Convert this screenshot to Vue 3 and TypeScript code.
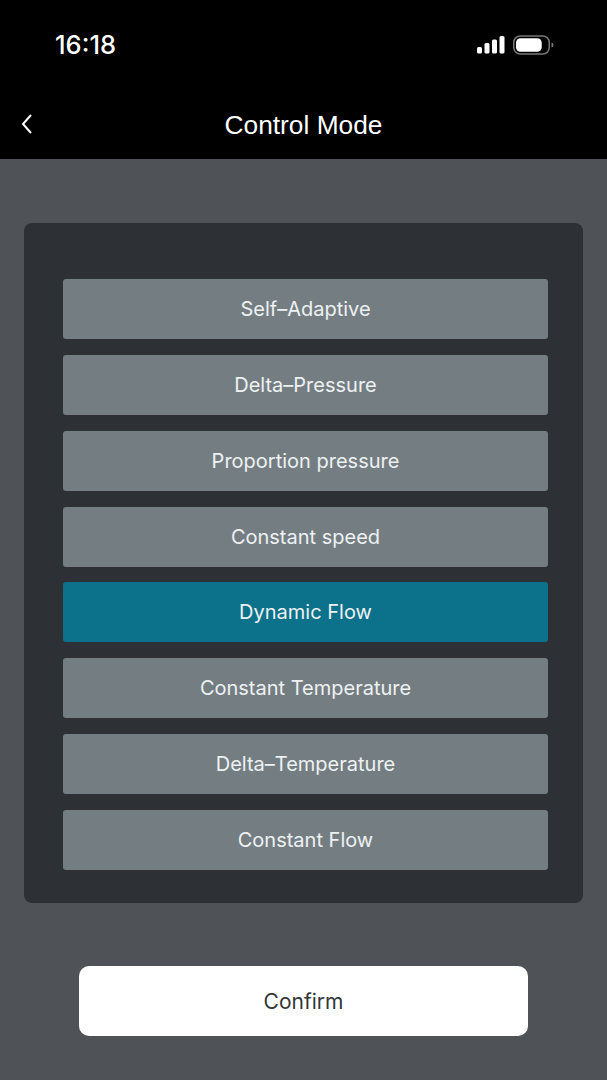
<script setup lang="ts">
const modes = [
  'Self–Adaptive',
  'Delta–Pressure',
  'Proportion pressure',
  'Constant speed',
  'Dynamic Flow',
  'Constant Temperature',
  'Delta–Temperature',
  'Constant Flow',
]
const activeMode = 'Dynamic Flow'
</script>

<template>
  <div class="screen">
    <header class="header">
      <div class="status-bar">
        <span class="time">16:18</span>
        <div class="status-icons">
          <svg width="28" height="18" viewBox="0 0 28 18" fill="#fff">
            <rect x="0" y="11" width="5" height="6.500" rx="1.5" />
            <rect x="7.500" y="7" width="5" height="10.500" rx="1.5" />
            <rect x="15" y="3.500" width="5" height="14" rx="1.5" />
            <rect x="22.500" y="0" width="5" height="17.500" rx="1.5" />
          </svg>
          <svg width="41" height="20" viewBox="0 0 41 20">
            <rect x="0.750" y="1" width="35.500" height="18" rx="6.500" fill="none" stroke="#777" stroke-width="1.500" />
            <rect x="3" y="3.300" width="25.700" height="13.400" rx="4.500" fill="#fff" />
            <path d="M38.500 7.500 C40 8 40.500 9 40.500 10 C40.500 11 40 12 38.500 12.500 Z" fill="#777" />
          </svg>
        </div>
      </div>
      <div class="nav-bar">
        <svg class="back" width="14" height="22" viewBox="0 0 14 22" fill="none" stroke="#fff" stroke-width="2">
          <path d="M11 2 L3 11 L11 20" />
        </svg>
        <h1 class="title">Control Mode</h1>
      </div>
    </header>

    <main class="content">
      <section class="panel">
        <button
          v-for="mode in modes"
          :key="mode"
          class="mode"
          :class="{ active: mode === activeMode }"
        >
          {{ mode }}
        </button>
      </section>
      <button class="confirm">Confirm</button>
    </main>
  </div>
</template>

<style scoped>
.screen {
  width: 607px;
  height: 1080px;
  display: flex;
  flex-direction: column;
  background: #4f5256;
  font-family: 'Liberation Sans', Arial, sans-serif;
  overflow: hidden;
}

.header {
  height: 159px;
  background: #000;
  color: #fff;
}

.status-bar {
  height: 90px;
  display: flex;
  align-items: center;
  justify-content: space-between;
  padding: 0 53px 0 55px;
}

.time {
  margin-bottom: 2px;
  font-size: 25.5px;
  font-weight: 500;
  font-family: Inter, 'Liberation Sans', sans-serif;
}

.status-icons {
  display: flex;
  align-items: center;
  gap: 8.5px;
}

.nav-bar {
  position: relative;
  height: 69px;
  padding-top: 2px;
  box-sizing: border-box;
  display: flex;
  align-items: center;
  justify-content: center;
}

.back {
  position: absolute;
  left: 20px;
  top: 23px;
}

.title {
  margin: 0;
  font-size: 26.3px;
  font-weight: 400;
}

.content {
  flex: 1;
  display: flex;
  flex-direction: column;
  align-items: center;
  padding: 64px 24px 0;
}

.panel {
  width: 559px;
  height: 680px;
  box-sizing: border-box;
  padding: 56px 35px 0 39px;
  display: flex;
  flex-direction: column;
  gap: 15.85px;
  background: #2d3034;
  border-radius: 8px;
}

.mode {
  height: 60px;
  flex: none;
  border: none;
  border-radius: 3px;
  background: #747e82;
  color: #eef1f2;
  font-family: Inter, 'Liberation Sans', sans-serif;
  font-size: 20px;
}

.mode.active {
  background: #0c718a;
}

.confirm {
  width: 449px;
  height: 70px;
  margin-top: 63px;
  border: none;
  border-radius: 10px;
  background: #fff;
  color: #333639;
  font-family: Inter, 'Liberation Sans', sans-serif;
  font-size: 21px;
}
</style>
